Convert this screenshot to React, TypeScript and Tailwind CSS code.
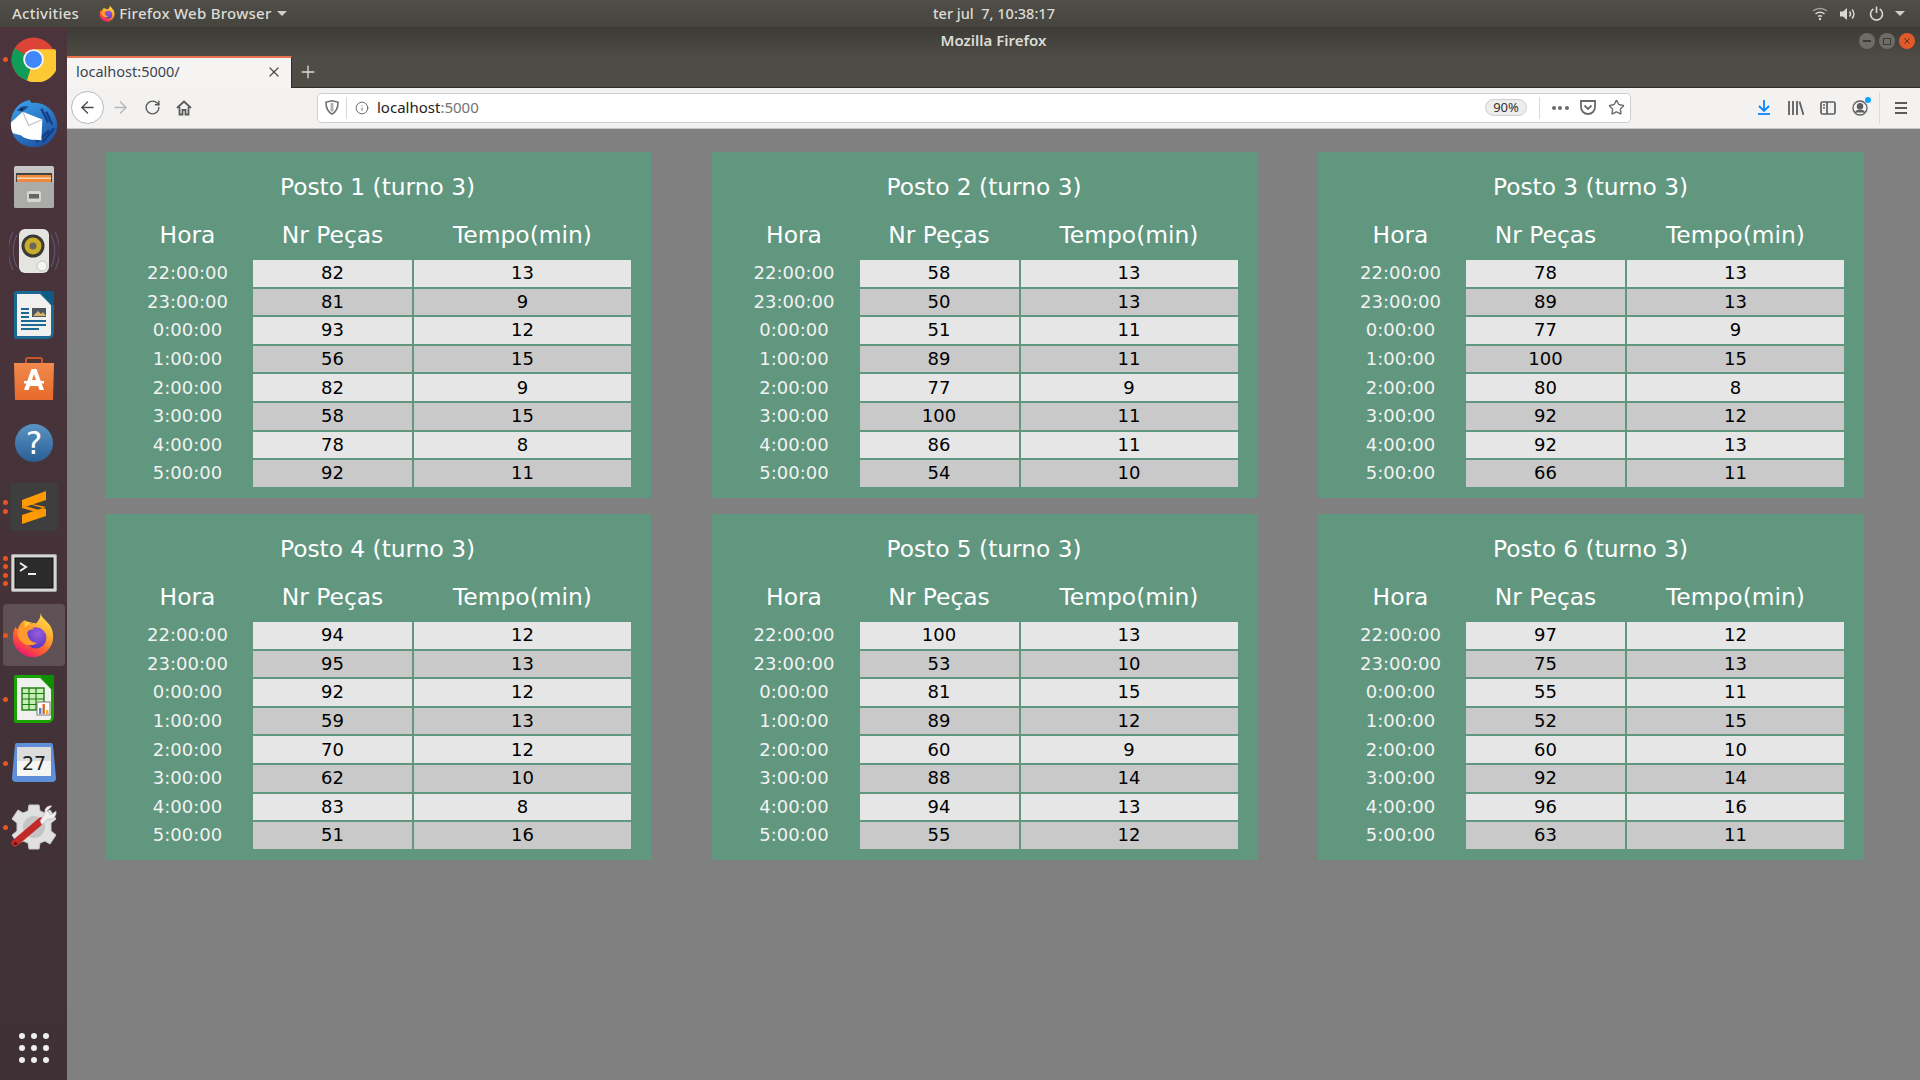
import React from 'react';
import { ArrowLeft, ArrowRight, RotateCw, Info, Star, Plus, X } from 'lucide-react';

interface Posto {
  id: number;
  rows: [number, number][];
}

const horas = ['22:00:00', '23:00:00', '0:00:00', '1:00:00', '2:00:00', '3:00:00', '4:00:00', '5:00:00'];

const postos: Posto[] = [
  { id: 1, rows: [[82, 13], [81, 9], [93, 12], [56, 15], [82, 9], [58, 15], [78, 8], [92, 11]] },
  { id: 2, rows: [[58, 13], [50, 13], [51, 11], [89, 11], [77, 9], [100, 11], [86, 11], [54, 10]] },
  { id: 3, rows: [[78, 13], [89, 13], [77, 9], [100, 15], [80, 8], [92, 12], [92, 13], [66, 11]] },
  { id: 4, rows: [[94, 12], [95, 13], [92, 12], [59, 13], [70, 12], [62, 10], [83, 8], [51, 16]] },
  { id: 5, rows: [[100, 13], [53, 10], [81, 15], [89, 12], [60, 9], [88, 14], [94, 13], [55, 12]] },
  { id: 6, rows: [[97, 12], [75, 13], [55, 11], [52, 15], [60, 10], [92, 14], [96, 16], [63, 11]] },
];

const FirefoxLogo = ({ size, uid }: { size: number; uid: string }) => (
  <svg width={size} height={size} viewBox="0 0 48 48">
    <defs>
      <linearGradient id={`${uid}Body`} x1="0.8" y1="0.05" x2="0.25" y2="1">
        <stop offset="0" stopColor="#ffe14a" />
        <stop offset="0.4" stopColor="#ff9f2e" />
        <stop offset="0.72" stopColor="#ff5136" />
        <stop offset="1" stopColor="#e5127c" />
      </linearGradient>
      <radialGradient id={`${uid}Globe`} cx="0.6" cy="0.3" r="0.8">
        <stop offset="0" stopColor="#9b5be0" />
        <stop offset="1" stopColor="#4a36b8" />
      </radialGradient>
    </defs>
    <path
      d="M31 1c1 5 5 7 8 11 2 2 3 4 4 7 2 7 1 15-4 20-4 5-10 8-16 8C12 47 2 38 2 26c0-5 1-8 3-11 0 1 1 3 2 3 1-4 4-8 8-10-1 3 0 5 1 6 3-2 7-3 10-2 3-3 5-6 5-11z"
      fill={`url(#${uid}Body)`}
    />
    <circle cx="26" cy="27" r="11" fill={`url(#${uid}Globe)`} />
    <path d="M9 16c5-3 11-2 15 2-4 0-6 1-7 3 0 6 4 11 10 11-4 4-12 4-17-2-4-4-4-10-1-14z" fill="#ff9a2e" />
    <path d="M15 9c2 1 5 2 8 2-4 1-7 3-8 6-1-2-1-6 0-8z" fill="#ffcf3c" />
  </svg>
);

const ChromeIcon = () => (
  <svg width="45" height="45" viewBox="0 0 48 48">
    <circle cx="24" cy="24" r="23.5" fill="#db4437" />
    <path d="M24 24 L4 12 A23.5 23.5 0 0 0 17 46.5 Z" fill="#0f9d58" />
    <path d="M24 13 H47 A23.5 23.5 0 0 1 17 46.5 L24 24 Z" fill="#fcc934" />
    <circle cx="24" cy="24" r="11" fill="#f1f3f4" />
    <circle cx="24" cy="24" r="9" fill="#4285f4" />
  </svg>
);

const ThunderbirdIcon = () => (
  <svg width="49" height="49" viewBox="0 0 50 50">
    <defs>
      <linearGradient id="tbBird" x1="0.2" y1="0" x2="0.8" y2="1">
        <stop offset="0" stopColor="#3aa0e8" />
        <stop offset="1" stopColor="#1d4f9f" />
      </linearGradient>
    </defs>
    <path d="M2 28C1 14 9 3 21 1l2 3c13-2 25 8 26 21 1 13-9 24-23 24C12 49 3 40 2 28z" fill="url(#tbBird)" />
    <path d="M33 10 L40 24 M38 13 L44 26 M28 44 L41 32 M34 44 L46 30" stroke="#123f88" strokeWidth="2.4" />
    <path d="M2 24 L14 13 L34 21 L33 42 C24 42 16 41 12 37 L4 35 C2 31 2 28 2 24z" fill="#fff" />
    <path d="M14 13 L20 27 L34 21" fill="none" stroke="#b9c3d0" strokeWidth="1.2" />
    <path d="M8 12 C11 7 17 6 20 8 L14 13 Z" fill="#1a4f96" />
    <circle cx="13" cy="10.5" r="1.4" fill="#10203a" />
  </svg>
);

const FilesIcon = () => (
  <svg width="44" height="44" viewBox="0 0 44 44">
    <defs>
      <linearGradient id="filesTop" x1="0" y1="0" x2="0" y2="1">
        <stop offset="0" stopColor="#c9c9c7" />
        <stop offset="1" stopColor="#9f9f9d" />
      </linearGradient>
    </defs>
    <path d="M2 3 Q2 1 4 1 H40 Q42 1 42 3 V41 Q42 43 40 43 H4 Q2 43 2 41 Z" fill="url(#filesTop)" />
    <rect x="4" y="8" width="36" height="9" fill="#43433f" />
    <rect x="5" y="10" width="34" height="7" fill="#ee8a3e" />
    <rect x="5" y="12.5" width="34" height="1.5" fill="#f8d8b0" />
    <path d="M4 17 H40 L42 19 V41 Q42 43 40 43 H4 Q2 43 2 41 V19 Z" fill="#ababa9" />
    <rect x="15" y="26" width="14" height="11" rx="2" fill="#d5d5d3" />
    <rect x="17" y="29" width="10" height="4.5" fill="#66665f" />
  </svg>
);

const SpeakerIcon = () => (
  <svg width="50" height="46" viewBox="0 0 50 46">
    <path d="M8 7 C3 16 3 30 8 39 M4 4 C-2 15-2 31 4 42 M42 7 C47 16 47 30 42 39 M46 4 C52 15 52 31 46 42" fill="none" stroke="#5f566b" strokeWidth="1.2" />
    <rect x="10" y="1" width="30" height="44" rx="6" fill="#e4e4e0" />
    <circle cx="24" cy="18" r="11.5" fill="#3a3936" />
    <circle cx="24" cy="18" r="8.5" fill="#c9ad2a" />
    <circle cx="24" cy="18" r="3.5" fill="#6b675c" />
    <circle cx="33" cy="38" r="5" fill="#f4f4f2" stroke="#c3c3bf" />
  </svg>
);

const WriterIcon = () => (
  <svg width="42" height="50" viewBox="0 0 42 50">
    <path d="M1 3 Q1 1 3 1 H41 V42 Q41 49 34 49 H3 Q1 49 1 47 Z" fill="#1c6a94" />
    <path d="M4 4 H27 L38 15 V44 Q38 46 36 46 H4 Z" fill="#f0f0ee" />
    <path d="M27 1 H41 V15 H38 Z" fill="#0f5b86" />
    <rect x="19" y="18" width="14" height="9" fill="#4c5660" />
    <path d="M20 26 L25 21 L28 24 L30 22 L33 26 Z" fill="#d9b26b" />
    <path d="M8 19 H16 M8 23 H16 M8 27 H16 M8 31 H33 M8 35 H33 M8 39 H26" stroke="#1c6a94" strokeWidth="2" />
  </svg>
);

const StoreIcon = () => (
  <svg width="44" height="44" viewBox="0 0 44 44">
    <defs>
      <linearGradient id="storeBg" x1="0" y1="0" x2="0" y2="1">
        <stop offset="0" stopColor="#f08a4c" />
        <stop offset="1" stopColor="#e66a2c" />
      </linearGradient>
    </defs>
    <path d="M14 8 V3 Q14 1 16 1 H28 Q30 1 30 3 V8" fill="none" stroke="#c8562b" strokeWidth="2" />
    <path d="M2 6 H42 L41 43 H3 Z" fill="url(#storeBg)" />
    <path d="M19.5 12 H24.5 L32 33 H27.5 L26 29 H18 L16.5 33 H12 Z M20 23 H24 L22 17 Z" fill="#fff" fillRule="evenodd" />
    <rect x="12" y="24" width="20" height="2.5" fill="#fff" />
  </svg>
);

const HelpIcon = () => (
  <svg width="40" height="40" viewBox="0 0 42 42">
    <defs>
      <linearGradient id="helpBg" x1="0" y1="0" x2="0" y2="1">
        <stop offset="0" stopColor="#5a93c4" />
        <stop offset="1" stopColor="#2a5f95" />
      </linearGradient>
    </defs>
    <circle cx="21" cy="21" r="20" fill="url(#helpBg)" />
    <text x="21" y="33" textAnchor="middle" fontSize="33" fill="#fff" fontFamily="'DejaVu Sans', sans-serif">?</text>
  </svg>
);

const SublimeIcon = () => (
  <div className="w-[48px] h-[48px] rounded-[3px] bg-[#3e3e3e] flex items-center justify-center">
    <svg width="26" height="33" viewBox="0 0 26 33">
      <path d="M25 0 V9 L1 17 V9 Z" fill="#ff9a00" />
      <path d="M1 11 L25 18 V25 L1 33 V24 L25 16 Z" fill="#ff9a00" />
      <path d="M1 14 L25 21 V24 L1 17 Z" fill="#f79400" />
    </svg>
  </div>
);

const TerminalIcon = () => (
  <svg className="mt-[4px]" width="46" height="38" viewBox="0 0 46 38">
    <rect x="0.5" y="0.5" width="45" height="37" rx="1" fill="#d6d6d4" stroke="#a3a3a0" />
    <rect x="4" y="4" width="38" height="30" fill="#2b2b2b" stroke="#111" />
    <path d="M9 9 L15 13 L9 17" fill="none" stroke="#eee" strokeWidth="2" />
    <rect x="17" y="19" width="8" height="2" fill="#eee" />
  </svg>
);

const CalcIcon = () => (
  <svg width="42" height="50" viewBox="0 0 42 50">
    <path d="M1 3 Q1 1 3 1 H41 V42 Q41 49 34 49 H3 Q1 49 1 47 Z" fill="#18a303" />
    <path d="M4 4 H27 L38 15 V44 Q38 46 36 46 H4 Z" fill="#f0f0ee" />
    <path d="M27 1 H41 V15 H38 Z" fill="#108d02" />
    <rect x="9" y="14" width="22" height="22" fill="#c6efb5" stroke="#1f7a12" strokeWidth="1.4" />
    <path d="M9 19.5 H31 M9 25 H31 M9 30.5 H31 M16 14 V36 M23 14 V36" stroke="#1f7a12" strokeWidth="1.2" />
    <rect x="24" y="28" width="13" height="13" fill="#fff" stroke="#777" />
    <rect x="26" y="34" width="2.4" height="6" fill="#3d8bd0" />
    <rect x="29.5" y="30" width="2.4" height="10" fill="#e4672a" />
    <rect x="33" y="36" width="2.4" height="4" fill="#e8b530" />
  </svg>
);

const CalendarIcon = () => (
  <svg width="44" height="40" viewBox="0 0 44 40">
    <path d="M3 2 Q3 0 5 0 H39 Q41 0 41 2 L44 35 Q44 39 40 39 H4 Q0 39 0 35 Z" fill="#5f8fd8" />
    <rect x="5" y="4" width="34" height="29" fill="#f5f5f5" />
    <rect x="5" y="4" width="34" height="14" fill="#dcdcdc" />
    <text x="22" y="27" textAnchor="middle" fontSize="19" fill="#222" fontFamily="'DejaVu Sans', sans-serif">27</text>
  </svg>
);

const SettingsIcon = () => (
  <svg width="46" height="46" viewBox="0 0 46 46">
    <path
      d="M18 1 H28 L29 7 L34 9 L39 6 L45 15 L40 19 V27 L45 31 L39 40 L34 37 L29 39 L28 45 H18 L17 39 L12 37 L7 40 L1 31 L6 27 V19 L1 15 L7 6 L12 9 L17 7 Z"
      fill="#e0e0e0"
      stroke="#c9c9c9"
    />
    <circle cx="23" cy="23" r="11" fill="#c4c4c4" />
    <path d="M4 39 L30 17" stroke="#c22a2a" strokeWidth="7" strokeLinecap="round" />
    <circle cx="4.5" cy="39.5" r="1.6" fill="#5c1010" />
    <path d="M29 17 L34 9 C33 4 37 1 41 2 L36 7 L40 11 L45 7 C46 12 42 16 37 15 L31 21 Z" fill="#efefef" stroke="#aaa" strokeWidth="0.6" />
  </svg>
);

const dockItems: { icon: React.ReactNode; dots: number; active?: boolean }[] = [
  { icon: <ChromeIcon />, dots: 1 },
  { icon: <ThunderbirdIcon />, dots: 0 },
  { icon: <FilesIcon />, dots: 0 },
  { icon: <SpeakerIcon />, dots: 0 },
  { icon: <WriterIcon />, dots: 0 },
  { icon: <StoreIcon />, dots: 0 },
  { icon: <HelpIcon />, dots: 0 },
  { icon: <SublimeIcon />, dots: 2 },
  { icon: <TerminalIcon />, dots: 4 },
  { icon: <FirefoxLogo size={46} uid="ffDock" />, dots: 1, active: true },
  { icon: <CalcIcon />, dots: 1 },
  { icon: <CalendarIcon />, dots: 1 },
  { icon: <SettingsIcon />, dots: 1 },
];

const Dock = () => (
  <div className="w-[67px] flex-none flex flex-col bg-gradient-to-b from-[#4c343c] to-[#3e3136] pb-[17px]">
    {dockItems.map((item, i) => (
      <div key={i} className="relative h-[64px] flex-none flex items-center justify-center">
        {item.dots > 0 && (
          <div className="absolute left-[2.5px] top-0 bottom-0 flex flex-col justify-center gap-[3.5px]">
            {Array.from({ length: item.dots }).map((_, d) => (
              <span key={d} className="block w-[5px] h-[5px] rounded-full bg-[#e95420]" />
            ))}
          </div>
        )}
        <div className={item.active ? 'w-[62px] h-[62px] rounded-[4px] bg-white/15 flex items-center justify-center' : 'flex items-center justify-center'}>
          {item.icon}
        </div>
      </div>
    ))}
    <div className="mt-auto mx-auto grid grid-cols-3 gap-x-[6px] gap-y-[6px]">
      {Array.from({ length: 9 }).map((_, i) => (
        <span key={i} className="block w-[6px] h-[6px] rounded-full bg-[#eeeeec]" />
      ))}
    </div>
  </div>
);

const TopBar = () => (
  <div className="h-[27px] flex-none flex items-center bg-gradient-to-b from-[#514e48] to-[#46443e] text-[#dcdcd6] text-[15px] font-medium font-['Noto_Sans',sans-serif] tracking-[0.25px]">
    <div className="w-[931px] flex-none flex items-center pl-[12px]">
      <span>Activities</span>
      <span className="ml-[20px] mr-[3px]"><FirefoxLogo size={17} uid="ffTop" /></span>
      <span>Firefox Web Browser</span>
      <svg className="ml-[6px]" width="10" height="5" viewBox="0 0 10 5"><path d="M0 0 H10 L5 5 Z" fill="#d0d0ca" /></svg>
    </div>
    <div className="w-[126px] flex-none text-center whitespace-pre text-[14.5px] tracking-normal">ter jul  7, 10:38:17</div>
    <div className="flex-1 flex items-center justify-end pr-[15px]">
      <svg width="16" height="14" viewBox="0 0 16 14" fill="none" stroke="#d8d8d2" strokeWidth="1.5">
        <path d="M1 4 C5 0.5 11 0.5 15 4" opacity="0.6" />
        <path d="M3.5 7 C6 4.8 10 4.8 12.5 7" />
        <path d="M6 9.5 C7.2 8.6 8.8 8.6 10 9.5" />
        <circle cx="8" cy="12" r="1.2" fill="#d8d8d2" stroke="none" />
      </svg>
      <svg className="ml-[12px]" width="16" height="14" viewBox="0 0 16 14" fill="none" stroke="#d8d8d2" strokeWidth="1.5">
        <path d="M0 4.5 H3 L7 1 V13 L3 9.5 H0 Z" fill="#d8d8d2" stroke="none" />
        <path d="M9.5 4.5 C10.8 6 10.8 8 9.5 9.5" />
        <path d="M12 2.5 C14.5 5 14.5 9 12 11.5" />
      </svg>
      <svg className="ml-[13px]" width="15" height="15" viewBox="0 0 15 15" fill="none" stroke="#d8d8d2" strokeWidth="1.6">
        <path d="M4.3 3 A6 6 0 1 0 10.7 3" />
        <path d="M7.5 0.5 V7" />
      </svg>
      <svg className="ml-[11px]" width="10" height="5" viewBox="0 0 10 5"><path d="M0 0 H10 L5 5 Z" fill="#d0d0ca" /></svg>
    </div>
  </div>
);

const TitleBar = () => (
  <div className="h-[29px] flex-none relative flex items-center justify-center pb-[2px] bg-gradient-to-b from-[#3c3b36] to-[#4e4b44]">
    <span className="text-[15px] font-semibold text-[#dcdcd6] font-['Noto_Sans',sans-serif]">Mozilla Firefox</span>
    <div className="absolute right-[5px] top-[6px] flex gap-[4px]">
      <span className="w-[16px] h-[16px] rounded-full bg-[#6e6c66] flex items-center justify-center">
        <span className="w-[8px] h-[2px] bg-[#3c3b36]" />
      </span>
      <span className="w-[16px] h-[16px] rounded-full bg-[#6e6c66] flex items-center justify-center">
        <span className="w-[8px] h-[7px] border border-[#3c3b36]" />
      </span>
      <span className="w-[16px] h-[16px] rounded-full bg-[#e2592a] flex items-center justify-center">
        <X size={10} strokeWidth={2} className="text-[#3c2a20]" />
      </span>
    </div>
  </div>
);

const TabStrip = () => (
  <div className="h-[32px] flex-none flex bg-[#4f4c45] border-b border-[#2f2e2b]">
    <div className="w-[225px] h-[32px] flex-none flex items-center bg-[#f5f4f3] border-t-2 border-t-[#e9714b] border-r border-r-[#2f2e2b] pl-[9px] pr-[9px] pb-[2px]">
      <span className="flex-1 text-[14.5px] text-[#3c4452] font-['Noto_Sans',sans-serif]">localhost:5000/</span>
      <X size={16} strokeWidth={1.8} className="text-[#4a4a4a]" />
    </div>
    <div className="w-[32px] flex items-center justify-center">
      <Plus size={20} strokeWidth={1.6} className="text-[#dcdcd6]" />
    </div>
  </div>
);

const ToolButton = ({ children }: { children: React.ReactNode }) => (
  <div className="w-[32px] h-[32px] flex-none flex items-center justify-center">{children}</div>
);

const Toolbar = () => (
  <div className="h-[41px] flex-none flex items-center bg-[#f3f2f1] border-b border-[#c9c8c6] pb-[1px] pl-[4px]">
    <div className="w-[33px] h-[33px] flex-none rounded-full bg-white border border-[#b8b8b8] flex items-center justify-center">
      <ArrowLeft size={19} strokeWidth={1.8} className="text-[#4c4c4c]" />
    </div>
    <ToolButton><ArrowRight size={19} strokeWidth={1.8} className="text-[#b8b8b8]" /></ToolButton>
    <ToolButton><RotateCw size={17} strokeWidth={2} className="text-[#5a5a5a]" /></ToolButton>
    <ToolButton>
      <svg width="16" height="16" viewBox="0 0 16 16" fill="none" stroke="#5a5a5a" strokeWidth="1.8">
        <path d="M1 8 L8 1.5 L15 8" />
        <path d="M3.5 7 V14.5 H6.5 V10 H9.5 V14.5 H12.5 V7" />
      </svg>
    </ToolButton>
    <div className="w-[117px] flex-none" />
    <div className="w-[1314px] h-[30px] flex-none flex items-center bg-white rounded-[4px] border border-[#d0cfcd]">
      <div className="w-[29px] flex-none flex justify-center border-r border-[#d8d8d8] h-[22px] items-center">
        <svg width="14" height="15" viewBox="0 0 14 15" fill="none" stroke="#707070" strokeWidth="1.6">
          <path d="M1 2.2 C4 1.6 5.5 1.2 7 0.8 C8.5 1.2 10 1.6 13 2.2 C13 8 11 12 7 14 C3 12 1 8 1 2.2 Z" />
          <path d="M7 3 V11.5" strokeWidth="3" opacity="0.55" />
        </svg>
      </div>
      <div className="w-[29px] flex-none flex justify-center">
        <Info size={14} strokeWidth={1.5} className="text-[#5a5a5a]" />
      </div>
      <span className="flex-1 pl-[1px] text-[15px] font-['Noto_Sans',sans-serif] text-[#222]">
        localhost<span className="text-[#737373]">:5000</span>
      </span>
      <div className="w-[42px] h-[17px] flex-none rounded-full bg-[#ededec] border border-[#cfcfcf] flex items-center justify-center text-[13px] text-[#333] font-['Noto_Sans',sans-serif]">
        90%
      </div>
      <div className="w-[1px] h-[22px] ml-[12px] flex-none bg-[#d8d8d8]" />
      <div className="ml-[6px] flex-none flex items-center">
        <div className="w-[28px] flex justify-center items-center gap-[2.5px]">
          <span className="w-[4px] h-[4px] rounded-full bg-[#6a6a6a]" />
          <span className="w-[4px] h-[4px] rounded-full bg-[#6a6a6a]" />
          <span className="w-[4px] h-[4px] rounded-full bg-[#6a6a6a]" />
        </div>
        <div className="w-[28px] flex justify-center">
          <svg width="16" height="15" viewBox="0 0 16 15" fill="none" stroke="#6a6a6a" strokeWidth="1.8">
            <path d="M1 1 H15 V7 C15 11 12 14 8 14 C4 14 1 11 1 7 Z" />
            <path d="M4.5 5.5 L8 9 L11.5 5.5" />
          </svg>
        </div>
        <div className="w-[28px] flex justify-center">
          <Star size={17} strokeWidth={1.9} className="text-[#6a6a6a]" />
        </div>
      </div>
    </div>
    <div className="w-[117px] flex-none" />
    <ToolButton>
      <svg width="14" height="15" viewBox="0 0 14 15" fill="none" stroke="#0a84ff" strokeWidth="1.8">
        <path d="M7 0 V10.5 M2 6 L7 11 L12 6" />
        <path d="M1 14 H13" />
      </svg>
    </ToolButton>
    <ToolButton>
      <svg width="16" height="14" viewBox="0 0 16 14" fill="none" stroke="#5f5f5f" strokeWidth="1.8">
        <path d="M1 0 V14 M5 0 V14 M9 0 V14 M11.5 0.5 L15.5 14" />
      </svg>
    </ToolButton>
    <ToolButton>
      <svg width="16" height="14" viewBox="0 0 16 14" fill="none" stroke="#5f5f5f" strokeWidth="1.7">
        <rect x="1" y="1" width="14" height="12" rx="1.5" />
        <path d="M7 1 V13 M3 4 H5 M3 7 H5" />
      </svg>
    </ToolButton>
    <ToolButton>
      <div className="relative">
        <svg width="16" height="16" viewBox="0 0 16 16" fill="none" stroke="#5f5f5f" strokeWidth="1.3">
          <circle cx="8" cy="8" r="7" />
          <circle cx="8" cy="6.2" r="2.6" fill="#5f5f5f" />
          <path d="M3.5 12.5 C5 9.5 11 9.5 12.5 12.5" fill="#5f5f5f" />
        </svg>
        <span className="absolute -top-[3px] -right-[3px] w-[6px] h-[6px] rounded-full bg-[#0aa5ff]" />
      </div>
    </ToolButton>
    <div className="w-[1px] h-[32px] ml-[3px] mr-[5px] flex-none bg-[#dcdbd9]" />
    <ToolButton>
      <svg width="14" height="12" viewBox="0 0 14 12" fill="none" stroke="#5a5a5a" strokeWidth="1.8">
        <path d="M1 1 H13 M1 6 H13 M1 11 H13" />
      </svg>
    </ToolButton>
  </div>
);

const PostoCard = ({ posto }: { posto: Posto }) => (
  <div className="bg-[#61967f] pl-[17px] pr-[18px] pb-[9px] h-[346px]">
    <h2 className="h-[68px] pt-[2px] flex items-center justify-center text-[23.3px] text-white font-normal">
      Posto {posto.id} (turno 3)
    </h2>
    <table className="table-fixed border-separate border-spacing-[2px] w-[511px]">
      <colgroup>
        <col className="w-[127px]" />
        <col className="w-[159px]" />
        <col className="w-[217px]" />
      </colgroup>
      <thead>
        <tr>
          <th className="h-[36px] p-0 pb-[10px] text-[23.4px] leading-[26px] font-normal text-white">Hora</th>
          <th className="h-[36px] p-0 pb-[10px] text-[23.4px] leading-[26px] font-normal text-white">Nr Peças</th>
          <th className="h-[36px] p-0 pb-[10px] text-[23.4px] leading-[26px] font-normal text-white">Tempo(min)</th>
        </tr>
      </thead>
      <tbody>
        {posto.rows.map((row, i) => (
          <tr key={i}>
            <td className="h-[26.6px] p-0 text-center text-[18px] leading-none text-[#f2f2f2]">{horas[i]}</td>
            <td className={`h-[26.6px] p-0 text-center text-[18px] leading-none text-black ${i % 2 === 0 ? 'bg-[#e6e6e6]' : 'bg-[#c9c9c9]'}`}>{row[0]}</td>
            <td className={`h-[26.6px] p-0 text-center text-[18px] leading-none text-black ${i % 2 === 0 ? 'bg-[#e6e6e6]' : 'bg-[#c9c9c9]'}`}>{row[1]}</td>
          </tr>
        ))}
      </tbody>
    </table>
  </div>
);

export default function App() {
  return (
    <div className="w-[1920px] h-[1080px] flex flex-col overflow-hidden font-['DejaVu_Sans',sans-serif]">
      <TopBar />
      <div className="flex-1 flex min-h-0">
        <Dock />
        <div className="flex-1 flex flex-col min-w-0">
          <TitleBar />
          <TabStrip />
          <Toolbar />
          <div className="flex-1 bg-[#808080] pt-[23px] pl-[38px]">
            <div className="grid grid-cols-[546px_546px_546px] gap-x-[60.5px] gap-y-[16px]">
              {postos.map((p) => (
                <PostoCard key={p.id} posto={p} />
              ))}
            </div>
          </div>
        </div>
      </div>
    </div>
  );
}
